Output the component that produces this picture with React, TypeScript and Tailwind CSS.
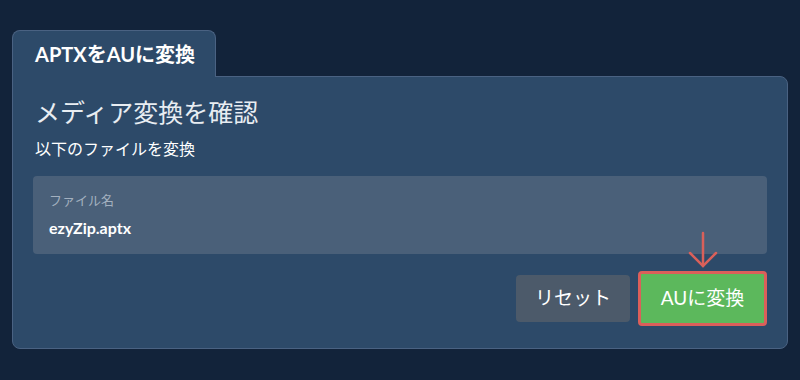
import React from "react";

export default function App() {
  return (
    <div
      className="w-[800px] h-[380px] bg-[#12233a] pl-[12px] pr-[12px] pt-[30px]"
      style={{ fontFamily: "Lato, 'Noto Sans CJK JP', sans-serif" }}
    >
      <div className="relative z-10 w-[204px] h-[47px] rounded-t-[8px] border border-b-0 border-[#4a6282] bg-[#2d4a69] flex items-center pl-[22px]">
        <span className="text-white font-bold text-[20px]">APTXをAUに変換</span>
      </div>
      <div className="relative -mt-px w-[776px] h-[273px] rounded-[8px] rounded-tl-none border border-[#4a6282] bg-[#2d4a69] px-[20px] pt-[19px]">
        <div className="text-[#e8edf2] text-[25px] leading-[32px] pl-[2px]">メディア変換を確認</div>
        <div className="text-white text-[16px] leading-[22px] mt-[10px] pl-[2px]">以下のファイルを変換</div>
        <div className="mt-[16px] h-[78px] rounded-[4px] bg-[#4a6079] px-[16px] pt-[15px]">
          <div className="text-[#a3b0bf] text-[13px] leading-[18px]">ファイル名</div>
          <div className="text-white font-bold text-[16px] leading-[20px] mt-[9px]">ezyZip.aptx</div>
        </div>
        <div className="mt-[17px] flex justify-end items-center gap-[8px]">
          <button className="w-[114px] h-[47px] rounded-[4px] bg-[#4c5a6a] text-white text-[19px]">リセット</button>
          <div className="relative">
            <svg
              className="absolute left-1/2 -translate-x-1/2 -top-[40px]"
              width="30"
              height="38"
              viewBox="0 0 30 38"
              fill="none"
              stroke="#d9605a"
              strokeWidth="2.5"
              strokeLinecap="round"
            >
              <path d="M15 2 L15 35" />
              <path d="M2 22 L15 35 L28 22" />
            </svg>
            <button className="w-[129px] h-[55px] rounded-[4px] border-[3px] border-[#db5f5a] bg-[#5cb85c] text-white text-[19px]">
              AUに変換
            </button>
          </div>
        </div>
      </div>
    </div>
  );
}
